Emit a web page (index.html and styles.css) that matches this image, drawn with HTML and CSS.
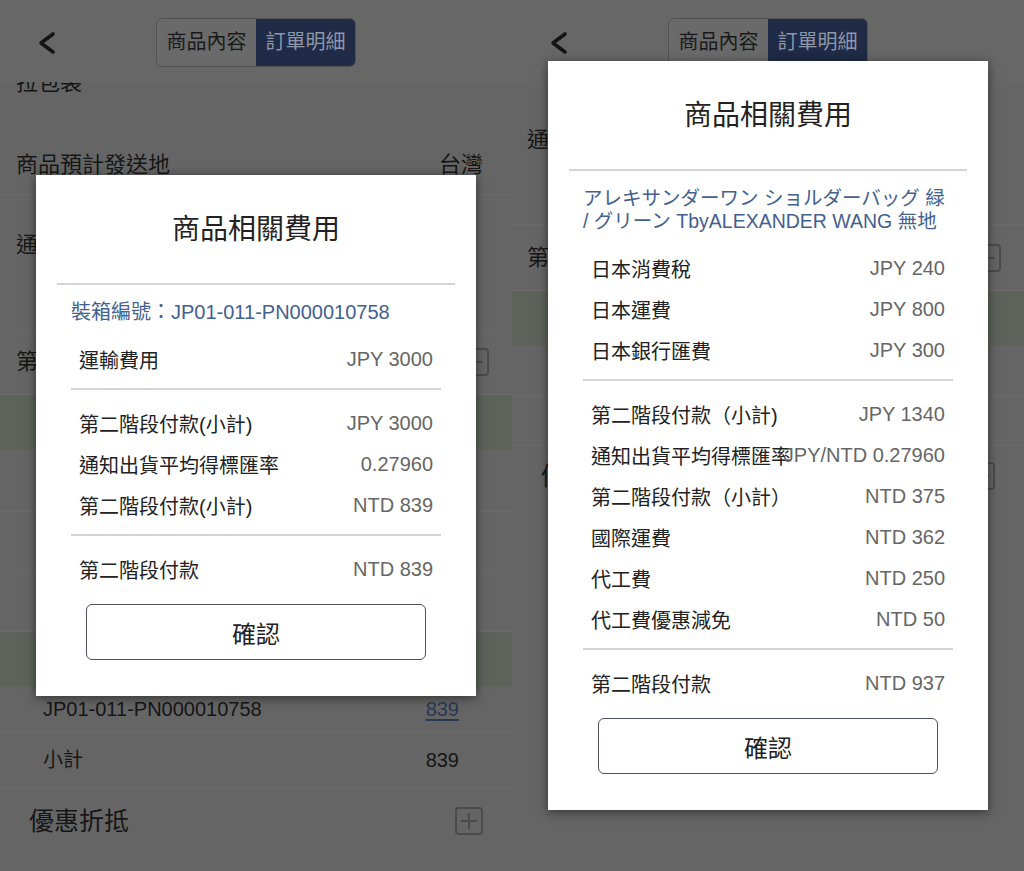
FILE: index.html
```html
<!DOCTYPE html>
<html lang="zh-Hant">
<head>
<meta charset="utf-8">
<title>訂單明細</title>
<link rel="stylesheet" href="styles.css">
</head>
<body>
<section class="panel">
  <header class="topbar">
    <svg class="back" viewBox="0 0 20 24" width="20" height="24"><path d="M16 3 L4 12 L16 21" /></svg>
    <div class="seg"><span class="seg-tab">商品內容</span><span class="seg-tab active">訂單明細</span></div>
  </header>
  <div class="content">
    <div class="row r-clip"><span>拉包袋</span></div>
    <div class="row r-dest"><span>商品預計發送地</span><span>台灣</span></div>
    <div class="row r-tall"><span>通知出貨平均得標匯率</span></div>
    <div class="row r-head"><span>第二階段付款</span><span class="plus"></span></div>
    <div class="row band"></div>
    <div class="row r-empty"></div>
    <div class="row r-empty2"></div>
    <div class="row r-empty3"></div>
    <div class="row band band2"></div>
    <div class="row r-item"><span>JP01-011-PN000010758</span><a class="link">839</a></div>
    <div class="row r-sub"><span>小計</span><span>839</span></div>
    <div class="row r-section"><span>優惠折抵</span><span class="plus big"></span></div>
  </div>
  <div class="backdrop">
    <div class="modal">
      <h2 class="modal-title">商品相關費用</h2>
      <div class="title-rule"></div>
      <p class="ref">裝箱編號：JP01-011-PN000010758</p>
      <div class="group first">
        <div class="fee"><span class="fee-label">運輸費用</span><span class="fee-value">JPY 3000</span></div>
      </div>
      <div class="rule"></div>
      <div class="group">
        <div class="fee"><span class="fee-label">第二階段付款(小計)</span><span class="fee-value">JPY 3000</span></div>
        <div class="fee"><span class="fee-label">通知出貨平均得標匯率</span><span class="fee-value">0.27960</span></div>
        <div class="fee"><span class="fee-label">第二階段付款(小計)</span><span class="fee-value">NTD 839</span></div>
      </div>
      <div class="rule"></div>
      <div class="group">
        <div class="fee"><span class="fee-label">第二階段付款</span><span class="fee-value">NTD 839</span></div>
      </div>
      <button class="confirm" type="button">確認</button>
    </div>
  </div>
</section>
<section class="panel">
  <header class="topbar">
    <svg class="back" viewBox="0 0 20 24" width="20" height="24"><path d="M16 3 L4 12 L16 21" /></svg>
    <div class="seg"><span class="seg-tab">商品內容</span><span class="seg-tab active">訂單明細</span></div>
  </header>
  <div class="content">
    <div class="row r-top"><span>通知出貨平均得標匯率</span></div>
    <div class="row r-head r-head2"><span>第二階段付款</span><span class="plus"></span></div>
    <div class="row band"></div>
    <div class="row r-short"></div>
    <div class="row r-short"></div>
    <div class="row r-section r-section2"><span>優惠折抵</span><span class="plus big"></span></div>
  </div>
  <div class="backdrop">
    <div class="modal">
      <h2 class="modal-title">商品相關費用</h2>
      <div class="title-rule"></div>
      <p class="ref ref-name">アレキサンダーワン ショルダーバッグ 緑 / グリーン TbyALEXANDER WANG 無地</p>
      <div class="group first">
        <div class="fee"><span class="fee-label">日本消費稅</span><span class="fee-value">JPY 240</span></div>
        <div class="fee"><span class="fee-label">日本運費</span><span class="fee-value">JPY 800</span></div>
        <div class="fee"><span class="fee-label">日本銀行匯費</span><span class="fee-value">JPY 300</span></div>
      </div>
      <div class="rule"></div>
      <div class="group">
        <div class="fee"><span class="fee-label">第二階段付款（小計)</span><span class="fee-value">JPY 1340</span></div>
        <div class="fee"><span class="fee-label">通知出貨平均得標匯率</span><span class="fee-value">JPY/NTD 0.27960</span></div>
        <div class="fee"><span class="fee-label">第二階段付款（小計）</span><span class="fee-value">NTD 375</span></div>
        <div class="fee"><span class="fee-label">國際運費</span><span class="fee-value">NTD 362</span></div>
        <div class="fee"><span class="fee-label">代工費</span><span class="fee-value">NTD 250</span></div>
        <div class="fee"><span class="fee-label">代工費優惠減免</span><span class="fee-value">NTD 50</span></div>
      </div>
      <div class="rule"></div>
      <div class="group">
        <div class="fee"><span class="fee-label">第二階段付款</span><span class="fee-value">NTD 937</span></div>
      </div>
      <button class="confirm" type="button">確認</button>
    </div>
  </div>
</section>
</body>
</html>
```

FILE: styles.css
```css
* { box-sizing: border-box; margin: 0; padding: 0; }
html, body { width: 1024px; height: 871px; overflow: hidden; }
body {
  display: flex;
  background: #656565;
  font-family: "Liberation Sans", "Noto Sans CJK TC", "Noto Sans CJK JP", sans-serif;
  color: #161616;
}

.panel {
  position: relative;
  width: 512px;
  height: 871px;
  flex: none;
  overflow: hidden;
  background: #656565;
  display: flex;
  flex-direction: column;
}

/* ---------- dimmed page behind the dialog ---------- */
.topbar {
  height: 82px;
  flex: none;
  display: grid;
  grid-template-columns: 1fr auto 1fr;
  align-items: start;
  padding-top: 18px;
  background: #676767;
}
.back {
  margin: 13px 0 0 37px;
  fill: none;
  stroke: #151515;
  stroke-width: 3.6;
  stroke-linecap: round;
  stroke-linejoin: round;
}
.seg {
  display: flex;
  height: 49px;
  border: 1px solid #525252;
  border-radius: 6px;
  overflow: hidden;
}
.seg-tab {
  width: 99px;
  font-size: 20px;
  line-height: 47px;
  text-align: center;
  color: #1a1a1a;
  background: #6a6a6a;
}
.seg-tab.active {
  background: #1f2b47;
  color: #8e97a8;
}

.content {
  flex: 1;
  overflow: hidden;
  display: flex;
  flex-direction: column;
}
.row {
  flex: none;
  display: flex;
  justify-content: space-between;
  align-items: center;
  padding: 0 29px 0 16px;
  font-size: 22px;
  line-height: 28px;
  border-bottom: 1px solid #6a6a6a;
}
.r-clip { margin-top: -13px; height: 66px; align-items: flex-start; }
.r-dest { height: 60px; }
.r-tall { height: 135px; align-items: flex-start; padding-top: 36px; }
.r-head { height: 65px; padding-right: 23px; }
.band { height: 55px; background: #5d625b; border-bottom: none; }
.r-empty { height: 62px; }
.r-empty2 { height: 63px; }
.r-empty3 { height: 57px; }
.r-item, .r-sub { font-size: 20px; padding: 0 53px 0 43px; }
.r-item { height: 45px; }
.r-sub { height: 57px; }
.r-section { height: 63px; font-size: 25px; padding: 0 29px 0 29px; border-bottom: none; }
.link { color: #2b3955; text-decoration: underline; text-underline-offset: 3px; }

.r-top { height: 143px; align-items: flex-start; padding-top: 44px; padding-left: 15px; }
.r-head2 { height: 66px; padding-left: 15px; }
.r-short { height: 50px; }
.r-section2 { height: 60px; }

.plus {
  position: relative;
  width: 28px;
  height: 28px;
  border: 2px solid #4b4b4b;
  border-radius: 4px;
}
.plus::before, .plus::after {
  content: "";
  position: absolute;
  background: #4b4b4b;
  left: 50%;
  top: 50%;
  transform: translate(-50%, -50%);
}
.plus::before { width: 16px; height: 2px; }
.plus::after { width: 2px; height: 16px; }

/* ---------- dialog ---------- */
.backdrop {
  position: absolute;
  inset: 0;
  display: flex;
  align-items: center;
  justify-content: center;
}
.modal {
  width: 440px;
  background: #ffffff;
  padding: 37px 35px 36px;
  box-shadow: 0 2px 10px rgba(0, 0, 0, 0.5);
  display: flex;
  flex-direction: column;
}
.modal-title {
  font-size: 28px;
  line-height: 36px;
  font-weight: 400;
  text-align: center;
  color: #222222;
}
.title-rule {
  height: 2px;
  background: #d5d5d5;
  margin: 35px -14px 0;
}
.ref {
  margin-top: 16px;
  font-size: 20px;
  line-height: 23px;
  color: #43608f;
}
.ref-name {
  font-size: 19.5px;
}
.group.first { margin-top: 15px; }
.fee {
  display: flex;
  justify-content: space-between;
  align-items: center;
  height: 41px;
  padding: 0 8px;
  font-size: 20px;
}
.fee-label {
  color: #222222;
  white-space: nowrap;
  min-width: 0;
  flex: 0 1 auto;
}
.fee-value {
  color: #666666;
  white-space: nowrap;
  flex: none;
}
.rule {
  height: 2px;
  background: #d5d5d5;
  margin: 8px 0 13px;
}
.confirm {
  margin: 14px 15px 0;
  height: 56px;
  border: 1.5px solid #4a5264;
  border-radius: 6px;
  background: #ffffff;
  font-family: inherit;
  font-size: 24px;
  font-weight: 400;
  color: #222222;
}
```
